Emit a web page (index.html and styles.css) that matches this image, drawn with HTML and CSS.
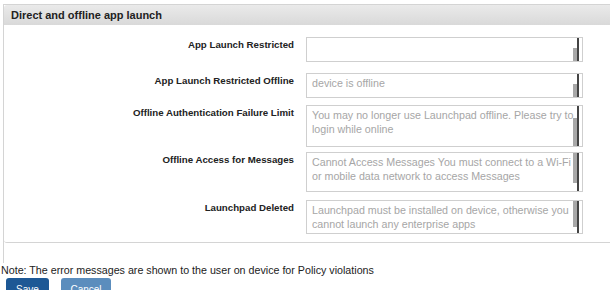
FILE: index.html
```html
<!DOCTYPE html>
<html lang="en">

<head>
    <meta charset="UTF-8">
    <title>Direct and offline app launch</title>
    <link rel="stylesheet" href="styles.css">
</head>

<body>
    <div class="wrap">
        <div class="panel">
            <div class="panelHead">Direct and offline app launch</div>
            <div class="panelBody">
                <div class="row r1">
                    <label>App Launch Restricted</label>
                    <div class="box"></div>
                </div>
                <div class="row r2">
                    <label>App Launch Restricted Offline</label>
                    <div class="box">device is offline</div>
                </div>
                <div class="row r3">
                    <label>Offline Authentication Failure Limit</label>
                    <div class="box">You may no longer use Launchpad offline. Please try to login while online</div>
                </div>
                <div class="row r4">
                    <label>Offline Access for Messages</label>
                    <div class="box">Cannot Access Messages You must connect to a Wi-Fi or mobile data network to access Messages</div>
                </div>
                <div class="row r5">
                    <label>Launchpad Deleted</label>
                    <div class="box">Launchpad must be installed on device, otherwise you cannot launch any enterprise apps</div>
                </div>
            </div>
        </div>
    </div>
    <p class="note">Note: The error messages are shown to the user on device for Policy violations</p>
    <div class="buttons">
        <button class="btn save">Save</button>
        <button class="btn cancel">Cancel</button>
    </div>
</body>

</html>
```
FILE: styles.css
```css
html,
body {
    margin: 0;
    padding: 0;
}

body {
    font-family: "Liberation Sans", Arial, sans-serif;
    font-size: 11px;
    color: #222;
    background: #fff;
    overflow: hidden;
}

.wrap {
    margin: 4px 0 0 3px;
    border-left: 1px solid #d4d4d4;
    padding-bottom: 20px;
}

.panel {
    width: 640px;
    border: 1px solid #d4d4d4;
    border-left: none;
    border-radius: 0 0 0 3px;
}

.panelHead {
    height: 20px;
    line-height: 20px;
    padding-left: 7px;
    font-size: 11px;
    font-weight: bold;
    color: #222;
    background: linear-gradient(#eaeaea, #d9d9d9);
    border-radius: 3px 0 0 0;
}

.panelBody {
    padding: 12px 0 8px;
}

.row {
    display: flex;
    align-items: flex-start;
    gap: 12px;
}

.row label {
    width: 290px;
    text-align: right;
    font-size: 9.7px;
    font-weight: bold;
    line-height: 14px;
    padding-top: 1px;
}

.box {
    position: relative;
    box-sizing: border-box;
    width: 277px;
    padding: 2px 0 0 5px;
    font-size: 10.7px;
    line-height: 14px;
    color: #a6a6a6;
    border: 1px solid #cfcfcf;
}

/* native scrollbar look */
.box::before {
    content: "";
    position: absolute;
    right: 3px;
    top: 0;
    bottom: 0;
    width: 2px;
    background: #444;
}

.box::after {
    content: "";
    position: absolute;
    right: 5px;
    bottom: 0;
    width: 4px;
    height: 55%;
    background: #a8a8a8;
}

.r1 .box {
    height: 25px;
}

.r2 {
    margin-top: 11px;
}

.r2 .box {
    height: 25px;
}

.r3 {
    margin-top: 7px;
}

.r3 .box {
    height: 42px;
}

.r3 .box::after {
    height: 70%;
}

.r4 {
    margin-top: 5px;
}

.r4 .box {
    height: 40px;
}

.r4 .box::after {
    top: 0;
    height: 80%;
}

.r5 {
    margin-top: 8px;
}

.r5 .box {
    height: 34px;
}

.r5 .box::after {
    top: 0;
    height: 80%;
}

.note {
    margin: 0;
    font-size: 10.7px;
    line-height: 14px;
    padding-left: 1px;
}

.buttons {
    display: flex;
    gap: 12px;
    padding: 1px 0 0 6px;
}

.btn {
    font-family: "Liberation Sans", Arial, sans-serif;
    font-size: 10px;
    color: #fff;
    border: none;
    border-radius: 3px;
    height: 22px;
    padding: 0;
}

.save {
    width: 43px;
    background: #1d5895;
}

.cancel {
    width: 50px;
    background: #5b8dbd;
}
```
